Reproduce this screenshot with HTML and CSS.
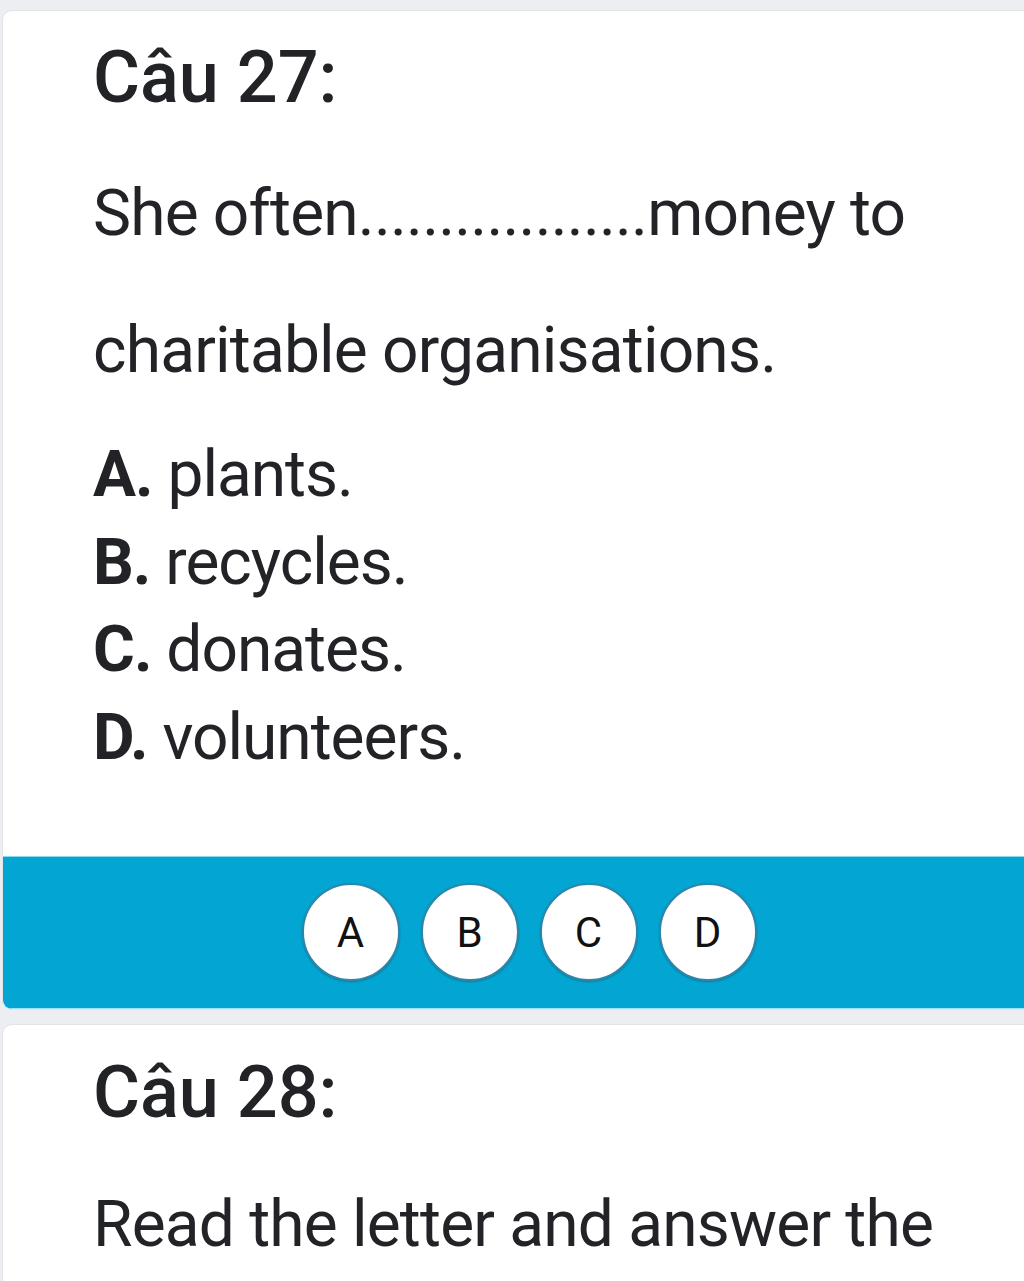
FILE: index.html
```html
<!DOCTYPE html>
<html lang="vi">
<head>
    <meta charset="UTF-8">
    <meta name="viewport" content="width=device-width, initial-scale=1.0">
    <title>Câu hỏi trắc nghiệm</title>
    <link rel="stylesheet" href="styles.css">
</head>
<body>

    <div class="question-card">
        <div class="question-body">
            <h2 class="question-title">Câu 27:</h2>
            <p class="question-text">She often..................money to charitable organisations.</p>
            <div class="options">
                <div class="option"><b>A.</b> plants.</div>
                <div class="option"><b>B.</b> recycles.</div>
                <div class="option"><b>C.</b> donates.</div>
                <div class="option"><b>D.</b> volunteers.</div>
            </div>
        </div>
        <div class="answer-bar">
            <button class="answer-btn">A</button>
            <button class="answer-btn">B</button>
            <button class="answer-btn">C</button>
            <button class="answer-btn">D</button>
        </div>
    </div>

    <div class="question-card">
        <div class="question-body next">
            <h2 class="question-title">Câu 28:</h2>
            <p class="question-text">Read the letter and answer the questions below.</p>
        </div>
    </div>

</body>
</html>
```

FILE: styles.css
```css
html, body {
    overflow: hidden;
}

body {
    margin: 0;
    padding: 10px 0 0 2px;
    background-color: #eceef2;
    font-family: Roboto, "Noto Sans", sans-serif;
    color: #222326;
    height: 1281px;
    box-sizing: border-box;
}

.question-card {
    width: 1052px;
    background-color: #ffffff;
    border: 1px solid #e2e3e6;
    border-radius: 10px;
    overflow: hidden;
    margin-bottom: 14px;
}

.question-body {
    padding: 25px 0 75px 90px;
}

.question-body.next {
    padding-top: 26px;
}

.question-title {
    margin: 0;
    font-size: 72px;
    font-weight: 500;
    line-height: 84px;
}

.question-text {
    margin: 25px 0 0 0;
    font-size: 64px;
    line-height: 137px;
    letter-spacing: -0.8px;
    width: 880px;
}

.next .question-text {
    margin-top: 21px;
}

.options {
    margin-top: 12px;
}

.option {
    font-size: 64px;
    line-height: 87.5px;
    letter-spacing: -1px;
}

.option b {
    font-weight: 700;
}

.answer-bar {
    display: flex;
    justify-content: center;
    gap: 21px;
    padding: 26px 0 27px 0;
    background-color: #03a6d3;
    border-top: 1px solid #86d9ee;
    border-bottom: 1px solid #9fe2f2;
}

.answer-btn {
    width: 98px;
    height: 98px;
    border-radius: 50%;
    background-color: #ffffff;
    border: 2px solid #2f86a8;
    box-shadow: 0 1px 2px rgba(0, 0, 0, 0.25);
    font-family: Roboto, sans-serif;
    font-size: 42px;
    color: #111111;
    padding: 0;
    cursor: pointer;
}
```
